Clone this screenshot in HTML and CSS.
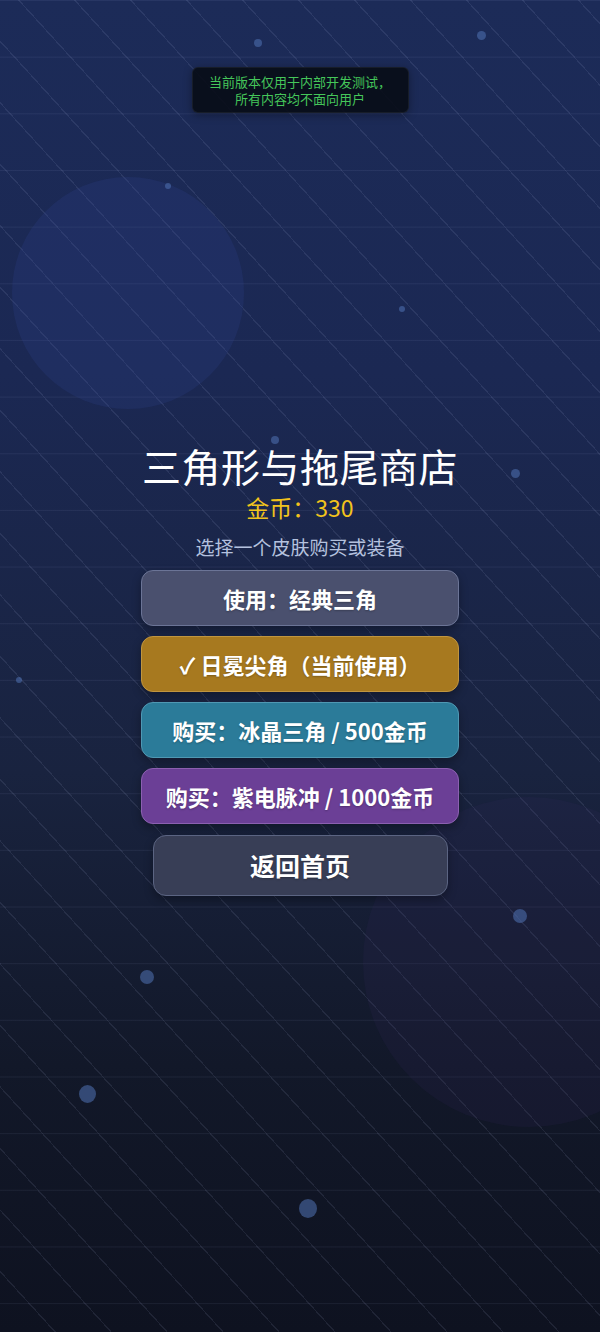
FILE: index.html
```html
<!DOCTYPE html>
<html lang="zh-CN">
<head>
<meta charset="utf-8">
<title>三角形与拖尾商店</title>
<link rel="stylesheet" href="styles.css">
</head>
<body>
<div class="page">
  <div class="bg" aria-hidden="true">
    <span class="orb orb-a"></span>
    <span class="orb orb-b"></span>
    <span class="dot" style="left:254px;top:39px;width:8px;height:8px"></span>
    <span class="dot" style="left:477px;top:31px;width:9px;height:9px"></span>
    <span class="dot" style="left:165px;top:183px;width:6px;height:6px"></span>
    <span class="dot" style="left:399px;top:306px;width:6px;height:6px"></span>
    <span class="dot" style="left:271px;top:436px;width:8px;height:8px"></span>
    <span class="dot" style="left:511px;top:469px;width:9px;height:9px"></span>
    <span class="dot" style="left:16px;top:677px;width:6px;height:6px"></span>
    <span class="dot" style="left:513px;top:909px;width:14px;height:14px"></span>
    <span class="dot" style="left:140px;top:970px;width:14px;height:14px"></span>
    <span class="dot" style="left:79px;top:1085px;width:17px;height:18px"></span>
    <span class="dot" style="left:299px;top:1199px;width:18px;height:19px"></span>
  </div>

  <main class="content">
    <div class="notice">
      <span class="notice-line">当前版本仅用于内部开发测试，</span>
      <span class="notice-line">所有内容均不面向用户</span>
    </div>

    <h1 class="title">三角形与拖尾商店</h1>
    <div class="coins">金币：330</div>
    <p class="hint">选择一个皮肤购买或装备</p>

    <div class="menu">
      <button class="skin skin-classic">使用：经典三角</button>
      <button class="skin skin-corona">✓ 日冕尖角（当前使用）</button>
      <button class="skin skin-ice">购买：冰晶三角 / 500金币</button>
      <button class="skin skin-pulse">购买：紫电脉冲 / 1000金币</button>
    </div>

    <button class="back">返回首页</button>
  </main>
</div>
</body>
</html>
```

FILE: styles.css
```css
* { box-sizing: border-box; }

html, body {
  margin: 0;
  padding: 0;
  background: #0e1220;
}

body {
  font-family: "Noto Sans CJK SC", "Noto Sans", "DejaVu Sans", sans-serif;
}

.page {
  position: relative;
  width: 600px;
  height: 1332px;
  overflow: hidden;
  background:
    linear-gradient(180deg, rgba(190, 200, 255, 0.07) 0 1px, transparent 1px) 0 0 / 100% 56.67px,
    repeating-linear-gradient(47.7deg, transparent 0 40.2px, rgba(200, 210, 255, 0.09) 40.2px 41.4px),
    linear-gradient(180deg, #1c2b58 0%, #1b2853 28%, #19233f 58%, #121829 80%, #0e1220 100%);
}

.bg {
  position: absolute;
  inset: 0;
  pointer-events: none;
}

.orb {
  position: absolute;
  border-radius: 50%;
}

.orb-a {
  left: 12px;
  top: 177px;
  width: 232px;
  height: 232px;
  background: rgba(50, 70, 150, 0.2);
}

.orb-b {
  left: 363px;
  top: 797px;
  width: 332px;
  height: 330px;
  background: rgba(55, 40, 100, 0.14);
}

.dot {
  position: absolute;
  border-radius: 50%;
  background: rgba(80, 115, 180, 0.55);
}

.content {
  position: relative;
  z-index: 1;
  display: flex;
  flex-direction: column;
  align-items: center;
}

.notice {
  margin-top: 67px;
  width: 217px;
  height: 46px;
  padding: 5px 0;
  border-radius: 6px;
  background: rgba(8, 12, 22, 0.9);
  border: 1px solid rgba(255, 255, 255, 0.06);
  box-shadow: 0 2px 8px rgba(0, 0, 0, 0.35);
  color: #45c65a;
  font-size: 13px;
  line-height: 17px;
  text-align: center;
}

.notice-line {
  display: block;
}

.title {
  margin: 329px 0 0;
  font-size: 39px;
  line-height: 46px;
  font-weight: 400;
  color: #ffffff;
  letter-spacing: 0.5px;
}

.coins {
  margin-top: 4px;
  font-size: 23px;
  line-height: 30px;
  color: #f2c31c;
}

.hint {
  margin: 12px 0 0;
  font-size: 19px;
  line-height: 26px;
  color: #b4c1de;
}

.menu {
  margin-top: 10px;
  display: flex;
  flex-direction: column;
  gap: 10px;
}

.skin,
.back {
  font-family: inherit;
  font-weight: 700;
  color: #ffffff;
  border: 1px solid rgba(255, 255, 255, 0.2);
  cursor: pointer;
  text-shadow: 0 1px 2px rgba(0, 0, 0, 0.25);
  box-shadow: 0 4px 10px rgba(0, 0, 0, 0.3);
}

.skin {
  width: 318px;
  height: 56px;
  border-radius: 12px;
  font-size: 22px;
  line-height: 1;
}

.skin-classic { background: #4a506e; border-color: #6b7496; }
.skin-corona  { background: #a7791f; border-color: #c0953f; }
.skin-ice     { background: #2b7b99; border-color: #4f98b3; }
.skin-pulse   { background: #6b3f96; border-color: #8b60b0; }

.back {
  margin-top: 11px;
  width: 295px;
  height: 61px;
  border-radius: 13px;
  background: #383e56;
  border-color: #5b6482;
  font-size: 25px;
  line-height: 1;
}
```
